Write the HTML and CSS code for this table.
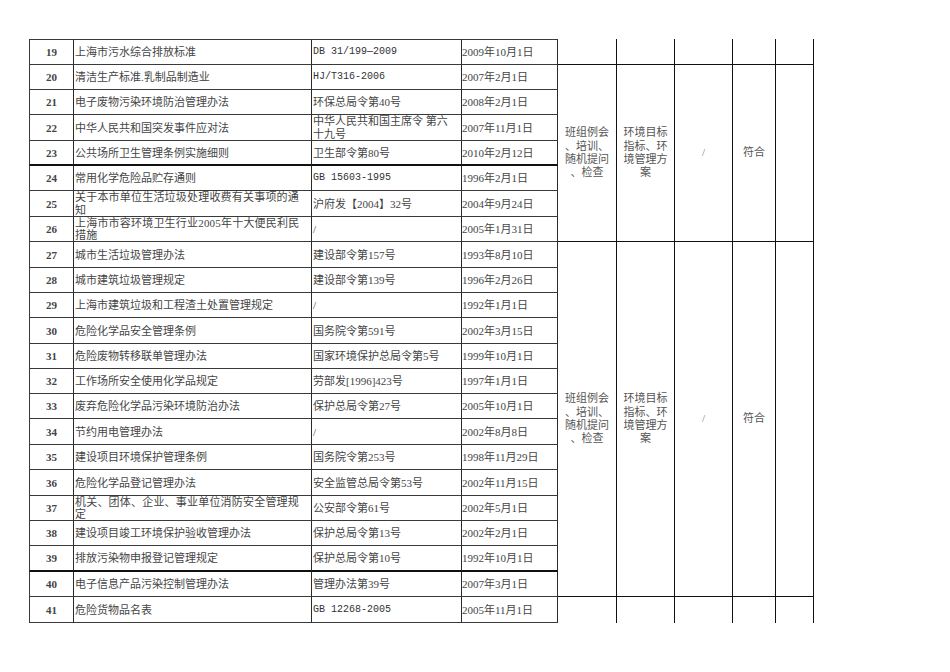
FILE: index.html
```html
<!DOCTYPE html>
<html lang="zh-CN">
<head>
<meta charset="utf-8">
<title>法规清单</title>
<link rel="stylesheet" href="styles.css">
</head>
<body>
<div class="sheet">
  <div class="c no top">19</div><div class="c nm top">上海市污水综合排放标准</div><div class="c cd mono top">DB 31/199—2009</div><div class="c dt top">2009年10月1日</div>
  <div class="c r"></div><div class="c r"></div><div class="c r"></div><div class="c r"></div><div class="c r"></div>

  <div class="c no">20</div><div class="c nm">清洁生产标准.乳制品制造业</div><div class="c cd mono">HJ/T316-2006</div><div class="c dt">2007年2月1日</div>
  <div class="c r m1 ctr">班组例会<br>、培训、<br>随机提问<br>、检查</div>
  <div class="c r m1 ctr">环境目标<br>指标、环<br>境管理方<br>案</div>
  <div class="c r m1 ctr slash">/</div>
  <div class="c r m1 ctr">符合</div>
  <div class="c r m1"></div>

  <div class="c no">21</div><div class="c nm">电子废物污染环境防治管理办法</div><div class="c cd">环保总局令第40号</div><div class="c dt">2008年2月1日</div>
  <div class="c no">22</div><div class="c nm">中华人民共和国突发事件应对法</div><div class="c cd"><span class="two">中华人民共和国主席令 第六<br>十九号</span></div><div class="c dt">2007年11月1日</div>
  <div class="c no thick">23</div><div class="c nm thick">公共场所卫生管理条例实施细则</div><div class="c cd thick">卫生部令第80号</div><div class="c dt thick">2010年2月12日</div>
  <div class="c no">24</div><div class="c nm">常用化学危险品贮存通则</div><div class="c cd mono">GB 15603-1995</div><div class="c dt">1996年2月1日</div>
  <div class="c no">25</div><div class="c nm"><span class="two sp">关于本市单位生活垃圾处理收费有关事项的通<br>知</span></div><div class="c cd">沪府发【2004】32号</div><div class="c dt">2004年9月24日</div>
  <div class="c no">26</div><div class="c nm"><span class="two sp">上海市市容环境卫生行业2005年十大便民利民<br>措施</span></div><div class="c cd">/</div><div class="c dt">2005年1月31日</div>

  <div class="c no">27</div><div class="c nm">城市生活垃圾管理办法</div><div class="c cd">建设部令第157号</div><div class="c dt">1993年8月10日</div>
  <div class="c r m2 ctr">班组例会<br>、培训、<br>随机提问<br>、检查</div>
  <div class="c r m2 ctr">环境目标<br>指标、环<br>境管理方<br>案</div>
  <div class="c r m2 ctr slash">/</div>
  <div class="c r m2 ctr">符合</div>
  <div class="c r m2"></div>

  <div class="c no">28</div><div class="c nm">城市建筑垃圾管理规定</div><div class="c cd">建设部令第139号</div><div class="c dt">1996年2月26日</div>
  <div class="c no">29</div><div class="c nm">上海市建筑垃圾和工程渣土处置管理规定</div><div class="c cd">/</div><div class="c dt">1992年1月1日</div>
  <div class="c no">30</div><div class="c nm">危险化学品安全管理条例</div><div class="c cd">国务院令第591号</div><div class="c dt">2002年3月15日</div>
  <div class="c no">31</div><div class="c nm">危险废物转移联单管理办法</div><div class="c cd">国家环境保护总局令第5号</div><div class="c dt">1999年10月1日</div>
  <div class="c no">32</div><div class="c nm">工作场所安全使用化学品规定</div><div class="c cd">劳部发[1996]423号</div><div class="c dt">1997年1月1日</div>
  <div class="c no">33</div><div class="c nm">废弃危险化学品污染环境防治办法</div><div class="c cd">保护总局令第27号</div><div class="c dt">2005年10月1日</div>
  <div class="c no">34</div><div class="c nm">节约用电管理办法</div><div class="c cd">/</div><div class="c dt">2002年8月8日</div>
  <div class="c no">35</div><div class="c nm">建设项目环境保护管理条例</div><div class="c cd">国务院令第253号</div><div class="c dt">1998年11月29日</div>
  <div class="c no">36</div><div class="c nm">危险化学品登记管理办法</div><div class="c cd">安全监管总局令第53号</div><div class="c dt">2002年11月15日</div>
  <div class="c no">37</div><div class="c nm"><span class="two sp">机关、团体、企业、事业单位消防安全管理规<br>定</span></div><div class="c cd">公安部令第61号</div><div class="c dt">2002年5月1日</div>
  <div class="c no">38</div><div class="c nm">建设项目竣工环境保护验收管理办法</div><div class="c cd">保护总局令第13号</div><div class="c dt">2002年2月1日</div>
  <div class="c no thick">39</div><div class="c nm thick">排放污染物申报登记管理规定</div><div class="c cd thick">保护总局令第10号</div><div class="c dt thick">1992年10月1日</div>
  <div class="c no">40</div><div class="c nm">电子信息产品污染控制管理办法</div><div class="c cd">管理办法第39号</div><div class="c dt">2007年3月1日</div>

  <div class="c no">41</div><div class="c nm">危险货物品名表</div><div class="c cd mono">GB 12268-2005</div><div class="c dt">2005年11月1日</div>
  <div class="c r last"></div><div class="c r last"></div><div class="c r last"></div><div class="c r last"></div><div class="c r last"></div>
</div>
</body>
</html>
```
FILE: styles.css
```css
html, body {
  margin: 0;
  padding: 0;
  background: #ffffff;
}
body {
  padding: 39px 0 0 29px;
  font-family: "Liberation Serif", "Noto Sans CJK SC", serif;
  font-size: 11px;
  color: #454545;
}
.sheet {
  display: grid;
  width: 785px;
  grid-template-columns: 45px 238px 150px 96px 59px 58px 58px 43px 38px;
  grid-template-rows: 26px 25px 25px 26px 25px 25px 26px 25px 26px 25px 25px 26px 25px 25px 25px 26px 25px 26px 25px 25px 26px 25px 26px;
}
.c {
  box-sizing: border-box;
  border-right: 1px solid #2a2a2a;
  border-bottom: 1px solid #3a3a3a;
  display: flex;
  align-items: center;
  min-width: 0;
  line-height: 14px;
  white-space: nowrap;
}
.top { border-top: 1px solid #3a3a3a; }
.thick { border-bottom: 2px solid #111; }
.no {
  border-left: 1px solid #3a3a3a;
  justify-content: center;
  font-weight: bold;
  color: #444;
}
.nm { padding-left: 1px; }
.cd { padding-left: 1px; }
.mono {
  font-family: "Liberation Mono", "Noto Sans CJK SC", monospace;
  font-size: 10px;
  color: #333;
}
.dt { padding-left: 0; }
.two { line-height: 12.5px; }
.sp { letter-spacing: 0.2px; }
.r { border-right-color: #111; border-bottom-color: #111; }
.m1 { grid-row: span 7; }
.m2 { grid-row: span 14; }
.last { border-bottom: none; }
.ctr {
  justify-content: center;
  text-align: center;
  line-height: 13.4px;
  color: #555;
  white-space: normal;
}
.slash { color: #777; }
```
